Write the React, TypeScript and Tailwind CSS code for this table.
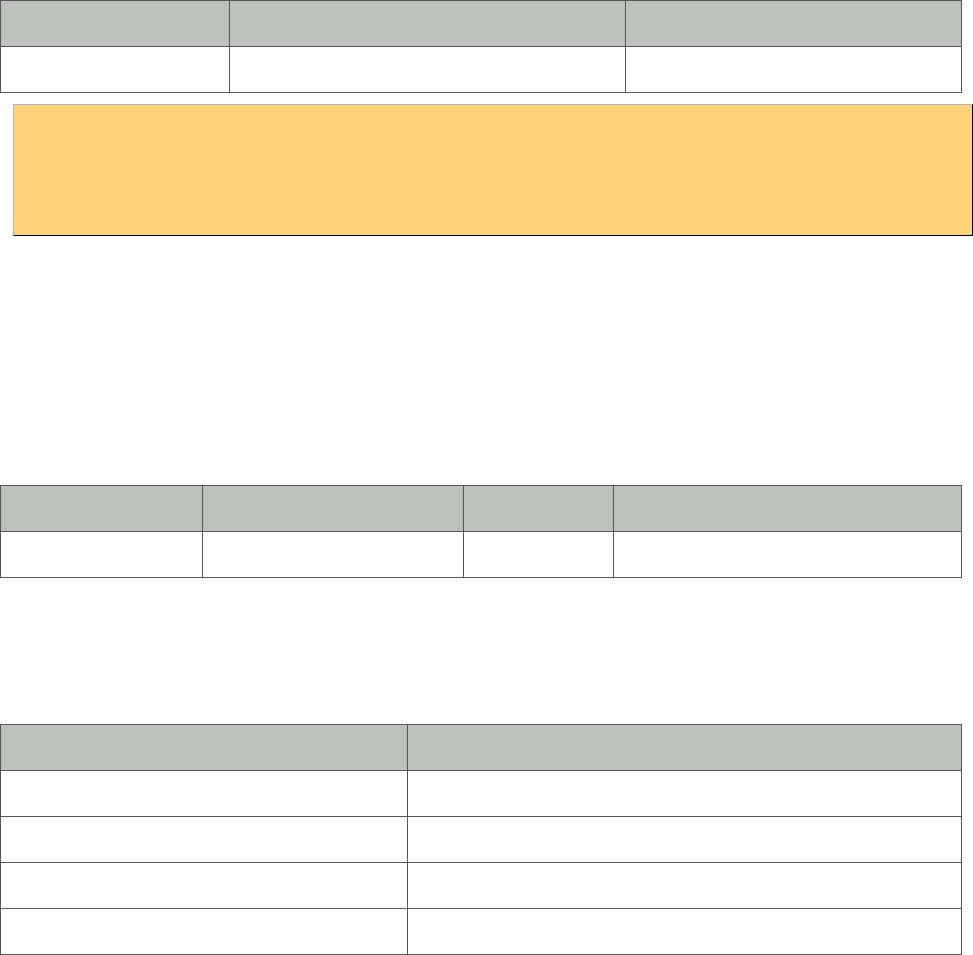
function Grid({ cols, n, rows }: { cols: string; n: number; rows: number }) {
  const cells = [];
  for (let r = 0; r < rows; r++) {
    for (let c = 0; c < n; c++) {
      cells.push(
        <div
          key={`${r}-${c}`}
          className={`h-[46px] border-r border-b border-[#555] ${r === 0 ? 'bg-[#bfc1bf]' : 'bg-white'}`}
        />
      );
    }
  }
  return <div className={`grid w-[962px] border-t border-l border-[#555] ${cols}`}>{cells}</div>;
}

export default function App() {
  return (
    <div className="w-[973px] h-[955px] bg-white overflow-hidden font-['Liberation_Sans',sans-serif]">
      <Grid cols="grid-cols-[229px_396px_336px]" n={3} rows={2} />
      <div className="ml-[13px] mt-[11px] w-[960px] h-[132px] bg-[#fed37a] border border-t-[#b5b5b5] border-l-[#b5b5b5] border-r-black border-b-black" />
      <div className="mt-[249px]">
        <Grid cols="grid-cols-[202px_261px_150px_348px]" n={4} rows={2} />
      </div>
      <div className="mt-[146px]">
        <Grid cols="grid-cols-[407px_554px]" n={2} rows={5} />
      </div>
    </div>
  );
}
